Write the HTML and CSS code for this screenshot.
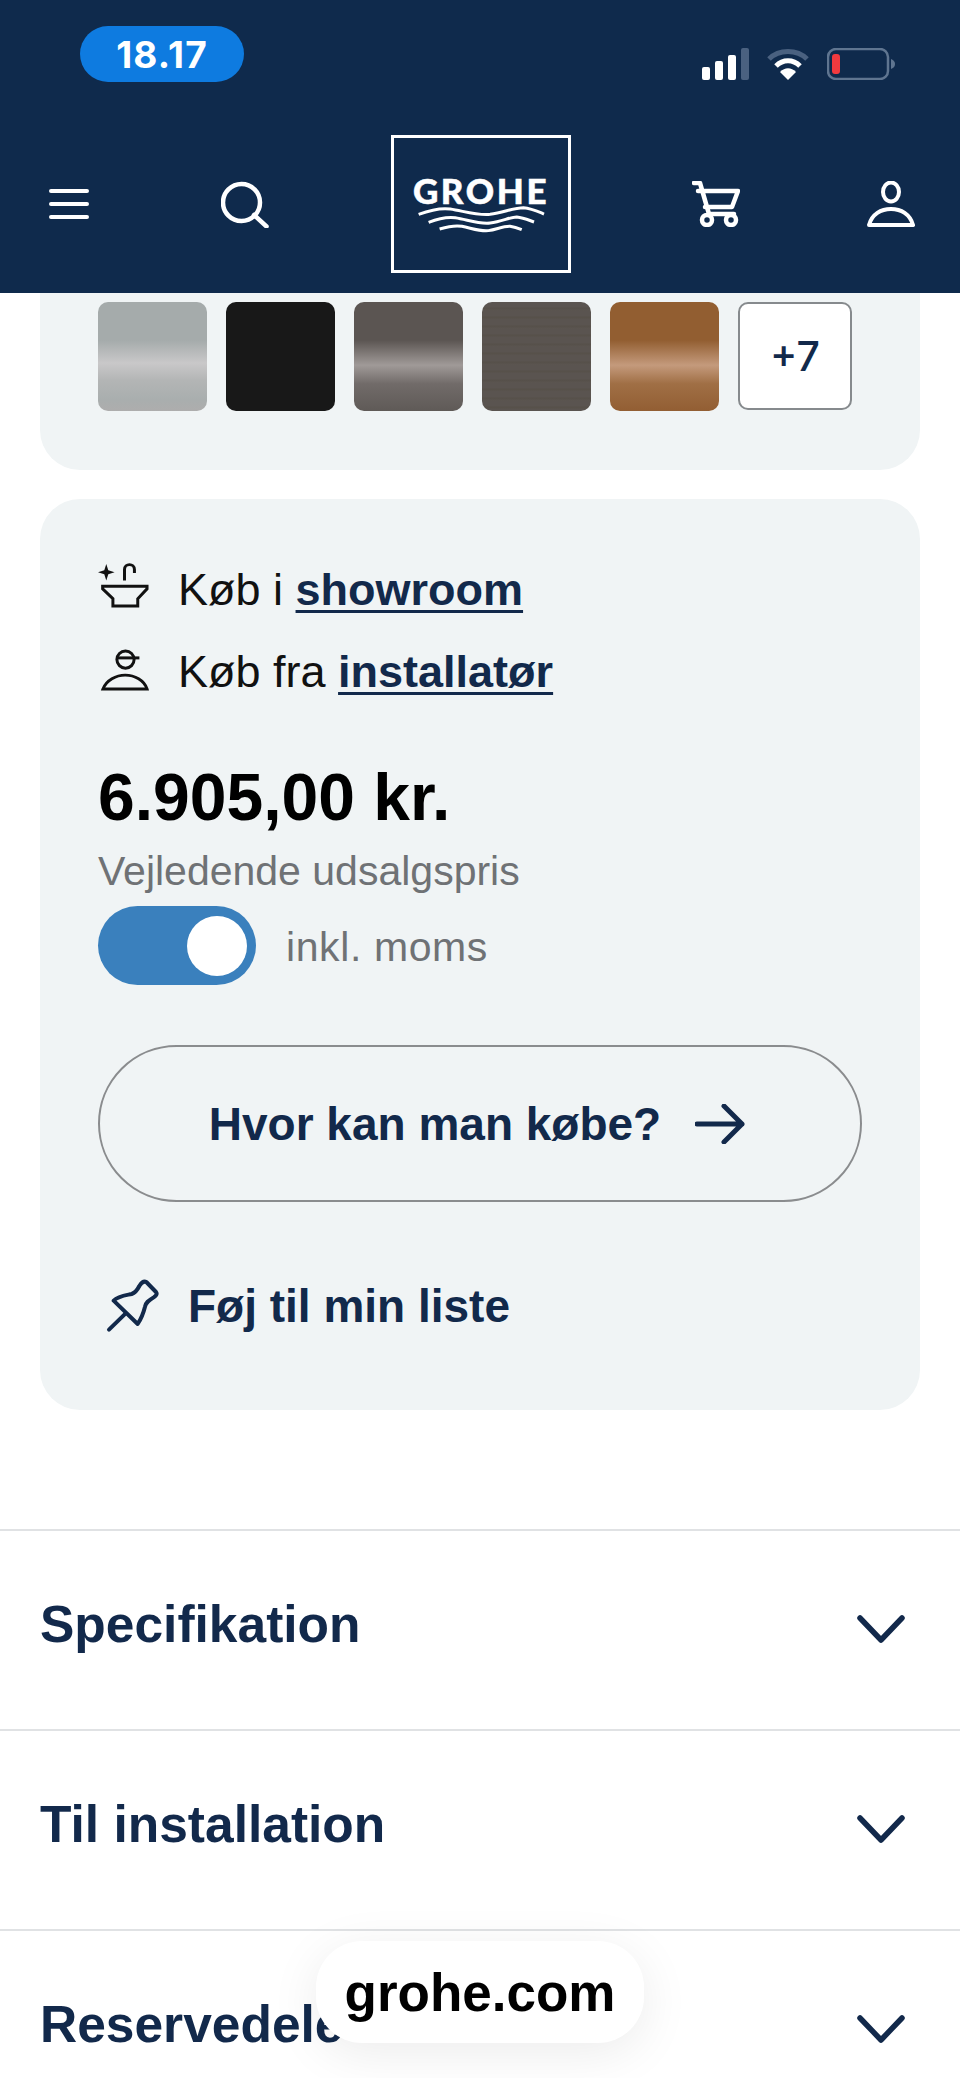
FILE: index.html
```html
<!DOCTYPE html>
<html lang="da">
<head>
    <meta charset="UTF-8">
    <meta name="viewport" content="width=device-width, initial-scale=1.0">
    <title>GROHE</title>
    <link rel="stylesheet" href="styles.css">
</head>
<body>
    <div class="page">
        <!-- Header -->
        <header class="site-header">
            <div class="status-bar">
                <span class="time-pill">18.17</span>
                <div class="status-icons">
                    <svg width="48" height="32" viewBox="0 0 48 32">
                        <rect x="1" y="19" width="8" height="13" rx="2" fill="#fff"/>
                        <rect x="14" y="13" width="8" height="19" rx="2" fill="#fff"/>
                        <rect x="27" y="7" width="8" height="25" rx="2" fill="#fff"/>
                        <rect x="40" y="0" width="8" height="32" rx="2" fill="#4a6180"/>
                    </svg>
                    <svg width="42" height="32" viewBox="0 0 42 32">
                        <path d="M2 11 C12 1 30 1 40 11" fill="none" stroke="#4a6180" stroke-width="5"/>
                        <path d="M9 18 C16 11 26 11 33 18" fill="none" stroke="#fff" stroke-width="5"/>
                        <path d="M13 24 C18 19 24 19 29 24 L21 32 Z" fill="#fff"/>
                    </svg>
                    <svg width="68" height="32" viewBox="0 0 68 32">
                        <rect x="1" y="1" width="60" height="30" rx="8" fill="none" stroke="#5f7590" stroke-width="2.5"/>
                        <rect x="5" y="6" width="8" height="20" rx="3" fill="#f13a3f"/>
                        <path d="M64 11 C67 12 68 14 68 16 C68 18 67 20 64 21 Z" fill="#5f7590"/>
                    </svg>
                </div>
            </div>
            <nav class="main-nav">
                <svg class="nav-menu" width="40" height="32" viewBox="0 0 40 32">
                    <path d="M2 3 H38 M2 16 H38 M2 29 H38" stroke="#fff" stroke-width="4" stroke-linecap="round"/>
                </svg>
                <svg class="nav-search" width="48" height="48" viewBox="0 0 48 48">
                    <circle cx="20.5" cy="22.5" r="18.5" fill="none" stroke="#fff" stroke-width="4.5"/>
                    <path d="M33 35 L45.5 46.5" stroke="#fff" stroke-width="4.5" stroke-linecap="round"/>
                </svg>
                <div class="logo">
                    <span class="logo-text">GROHE</span>
                    <svg width="128" height="30" viewBox="50 120 385 90">
                        <path d="M55 148 C90 135 120 128 150 132 C190 138 230 152 270 148 C310 143 340 128 370 128 C395 130 415 140 432 147" fill="none" stroke="#fff" stroke-width="9"/>
                        <path d="M85 172 C115 160 140 155 165 158 C200 163 235 178 270 174 C305 170 330 156 350 156 C370 158 385 165 402 171" fill="none" stroke="#fff" stroke-width="9"/>
                        <path d="M118 192 C145 184 165 180 185 184 C215 190 240 200 265 197 C290 193 310 183 330 184 C345 186 355 190 365 194" fill="none" stroke="#fff" stroke-width="9"/>
                    </svg>
                </div>
                <svg class="nav-cart" width="48" height="46" viewBox="0 0 48 46">
                    <path d="M2 2 H8 L17 33 H42 M6 10 H46 L40 26 H13" fill="none" stroke="#fff" stroke-width="4.5" stroke-linecap="round" stroke-linejoin="round"/>
                    <circle cx="15" cy="39" r="5" fill="none" stroke="#fff" stroke-width="4.5"/>
                    <circle cx="39" cy="39" r="5" fill="none" stroke="#fff" stroke-width="4.5"/>
                </svg>
                <svg class="nav-user" width="48" height="46" viewBox="0 0 48 46">
                    <ellipse cx="24" cy="11" rx="8" ry="9.5" fill="none" stroke="#fff" stroke-width="4"/>
                    <path d="M2 44 C5 33 14 28 24 28 C34 28 43 33 46 44 Z" fill="none" stroke="#fff" stroke-width="4" stroke-linejoin="round"/>
                </svg>
            </nav>
        </header>

        <!-- Finish swatches -->
        <section class="card swatch-card">
            <div class="swatch swatch-chrome"></div>
            <div class="swatch swatch-black"></div>
            <div class="swatch swatch-graphite"></div>
            <div class="swatch swatch-brushed"></div>
            <div class="swatch swatch-copper"></div>
            <div class="swatch-more">+7</div>
        </section>

        <!-- Price and buy -->
        <section class="card buy-card">
            <div class="buy-row">
                <svg class="buy-icon" width="53" height="47" viewBox="30 20 160 140">
                    <path d="M55 25 L61 44 L80 50 L61 56 L55 75 L49 56 L30 50 L49 44 Z" fill="#111"/>
                    <path d="M110 75 V42 C110 22 140 22 140 42 V52" fill="none" stroke="#111" stroke-width="9"/>
                    <path d="M44 92 H178 V100 L150 130 V152 H75 V130 L44 100 Z" fill="none" stroke="#111" stroke-width="9"/>
                </svg>
                <span>Køb i <a class="buy-link" href="#">showroom</a></span>
            </div>
            <div class="buy-row buy-row-second">
                <svg class="buy-icon" width="53" height="47" viewBox="30 262 160 140">
                    <circle cx="113" cy="308" r="26" fill="none" stroke="#111" stroke-width="9"/>
                    <path d="M85 303 H155" stroke="#111" stroke-width="9"/>
                    <path d="M45 397 C55 370 85 355 112 355 C140 355 170 370 178 397 Z" fill="none" stroke="#111" stroke-width="9"/>
                </svg>
                <span>Køb fra <a class="buy-link" href="#">installatør</a></span>
            </div>

            <p class="price">6.905,00 kr.</p>
            <p class="price-note">Vejledende udsalgspris</p>
            <div class="vat-row">
                <div class="toggle"><div class="toggle-knob"></div></div>
                <span class="vat-label">inkl. moms</span>
            </div>

            <a class="where-btn" href="#">
                Hvor kan man købe?
                <svg width="50" height="40" viewBox="0 0 50 40">
                    <path d="M2 20 H47 M29 2 L47 20 L29 38" fill="none" stroke="#12294b" stroke-width="5" stroke-linecap="round" stroke-linejoin="round"/>
                </svg>
            </a>

            <div class="list-row">
                <svg width="55" height="55" viewBox="30 20 165 165">
                    <path d="M133 44 C138 36 146 28 154 32 L183 62 C188 68 182 74 176 78 C160 88 152 94 150 106 C146 122 140 140 128 158 L56 88 C70 74 92 72 110 68 C122 64 128 54 133 44 Z" fill="none" stroke="#12294b" stroke-width="12" stroke-linejoin="round"/>
                    <path d="M92 126 L42 175" stroke="#12294b" stroke-width="12" stroke-linecap="round"/>
                </svg>
                <span>Føj til min liste</span>
            </div>
        </section>

        <!-- Accordion -->
        <section class="accordion">
            <div class="accordion-row">
                <h2>Specifikation</h2>
                <svg width="48" height="30" viewBox="0 0 48 30"><path d="M3 4 L24 26 L45 4" fill="none" stroke="#12294b" stroke-width="5.5" stroke-linecap="round" stroke-linejoin="round"/></svg>
            </div>
            <div class="accordion-row">
                <h2>Til installation</h2>
                <svg width="48" height="30" viewBox="0 0 48 30"><path d="M3 4 L24 26 L45 4" fill="none" stroke="#12294b" stroke-width="5.5" stroke-linecap="round" stroke-linejoin="round"/></svg>
            </div>
            <div class="accordion-row">
                <h2>Reservedele</h2>
                <svg width="48" height="30" viewBox="0 0 48 30"><path d="M3 4 L24 26 L45 4" fill="none" stroke="#12294b" stroke-width="5.5" stroke-linecap="round" stroke-linejoin="round"/></svg>
            </div>
        </section>

        <!-- Browser address pill -->
        <div class="url-pill">grohe.com</div>
    </div>
</body>
</html>
```

FILE: styles.css
```css
/* Basic reset */
* {
    margin: 0;
    padding: 0;
    box-sizing: border-box;
}

body {
    font-family: 'Liberation Sans', Arial, sans-serif;
    background-color: #fff;
    color: #111;
}

.page {
    position: relative;
    width: 960px;
    height: 2078px;
    overflow: hidden;
}

/* Header */
.site-header {
    height: 293px;
    background-color: #0f2a4c;
}

.status-bar {
    height: 135px;
    padding: 26px 65px 0 80px;
    display: flex;
    justify-content: space-between;
    align-items: flex-start;
}

.time-pill {
    width: 164px;
    height: 56px;
    border-radius: 28px;
    background-color: #0e7be0;
    color: #fff;
    font-family: 'Inter', sans-serif;
    font-size: 37px;
    font-weight: 700;
    letter-spacing: 1.2px;
    display: flex;
    justify-content: center;
    align-items: center;
}

.status-icons {
    margin-top: 22px;
    display: flex;
    gap: 18px;
}

.main-nav {
    display: flex;
    align-items: center;
    height: 138px;
    padding-left: 49px;
}

.nav-search { margin-left: 132px; }
.logo { margin-left: 122px; }
.nav-cart { margin-left: 121px; }
.nav-user { margin-left: 127px; }

.logo {
    width: 180px;
    height: 138px;
    border: 3px solid #fff;
    display: flex;
    flex-direction: column;
    align-items: center;
    padding-top: 35px;
}

.logo-text {
    font-family: 'Lato', sans-serif;
    font-weight: 900;
    font-size: 35px;
    line-height: 34px;
    letter-spacing: 2.6px;
    -webkit-text-stroke: 0.5px #fff;
    color: #fff;
    margin-bottom: -2px;
}

/* Cards */
.card {
    margin: 0 40px;
    background-color: #f0f4f5;
}

.swatch-card {
    height: 177px;
    padding: 9px 0 0 58px;
    border-radius: 0 0 40px 40px;
    display: flex;
    gap: 19px;
}

.swatch {
    width: 109px;
    height: 109px;
    border-radius: 10px;
}

.swatch-chrome {
    background: linear-gradient(#a5abab 0, #a5abab 35%, #c9c8c9 56%, #b3b5b5 72%, #a9aeae 90%, #aeadad 100%);
}

.swatch-black {
    background-color: #181818;
}

.swatch-graphite {
    background: linear-gradient(#5b5552 0, #5b5552 35%, #a09a98 58%, #716b69 75%, #5f5a57 100%);
}

.swatch-brushed {
    background: repeating-linear-gradient(#5a5450 0, #5a5450 5px, #565049 6px, #5b5551 9px);
}

.swatch-copper {
    background: linear-gradient(#925e31 0, #925e31 35%, #c49a7c 58%, #a06f45 75%, #925e33 100%);
}

.swatch-more {
    width: 114px;
    height: 108px;
    border: 2px solid #868a8d;
    border-radius: 10px;
    background-color: #fff;
    color: #12294b;
    font-family: 'Inter', sans-serif;
    font-size: 41px;
    font-weight: 500;
    display: flex;
    justify-content: center;
    align-items: center;
}

.buy-card {
    margin-top: 29px;
    height: 911px;
    padding: 63px 58px 0;
    border-radius: 40px;
}

.buy-row {
    display: flex;
    align-items: center;
    gap: 27px;
    height: 56px;
    font-size: 45px;
}

.buy-row-second {
    margin-top: 26px;
}

.buy-icon {
    flex-shrink: 0;
    align-self: flex-start;
}

.buy-link {
    color: #12294b;
    font-weight: bold;
    text-decoration: underline;
    text-underline-offset: 5px;
    text-decoration-thickness: 3px;
}

.price {
    margin-top: 62px;
    font-size: 66px;
    font-weight: bold;
    line-height: 70px;
    color: #000;
}

.price-note {
    margin-top: 17px;
    font-size: 41px;
    line-height: 44px;
    color: #6f7275;
}

.vat-row {
    margin-top: 13px;
    display: flex;
    align-items: center;
    gap: 30px;
    font-size: 41px;
    letter-spacing: 0.6px;
    color: #6f7275;
}

.vat-label {
    margin-top: 3px;
}

.toggle {
    width: 158px;
    height: 79px;
    border-radius: 40px;
    background-color: #3a80bd;
    display: flex;
    justify-content: flex-end;
    align-items: center;
    padding-right: 9px;
}

.toggle-knob {
    width: 60px;
    height: 60px;
    border-radius: 50%;
    background-color: #fff;
}

.where-btn {
    margin-top: 60px;
    width: 764px;
    height: 157px;
    padding-right: 6px;
    border: 2px solid #8a8c8e;
    border-radius: 79px;
    display: flex;
    justify-content: center;
    align-items: center;
    gap: 34px;
    color: #12294b;
    font-size: 46px;
    font-weight: bold;
    text-decoration: none;
}

.list-row {
    margin-top: 76px;
    padding-left: 7px;
    display: flex;
    align-items: center;
    gap: 28px;
    color: #12294b;
    font-size: 46px;
    font-weight: bold;
}

/* Accordion */
.accordion {
    margin-top: 119px;
}

.accordion-row {
    height: 200px;
    padding: 0 55px 0 40px;
    border-top: 2px solid #e0e2e4;
    display: flex;
    justify-content: space-between;
    align-items: center;
}

.accordion-row h2 {
    color: #12294b;
    font-size: 51.5px;
    font-weight: bold;
    margin-top: -12px;
}

.accordion-row svg {
    margin-top: -2px;
}

/* Browser address pill */
.url-pill {
    position: absolute;
    left: 316px;
    top: 1941px;
    width: 328px;
    height: 102px;
    border-radius: 46px;
    background-color: #fff;
    box-shadow: 0 10px 50px rgba(0, 0, 0, 0.08);
    color: #000;
    font-size: 53px;
    font-weight: bold;
    display: flex;
    justify-content: center;
    align-items: center;
}
```
